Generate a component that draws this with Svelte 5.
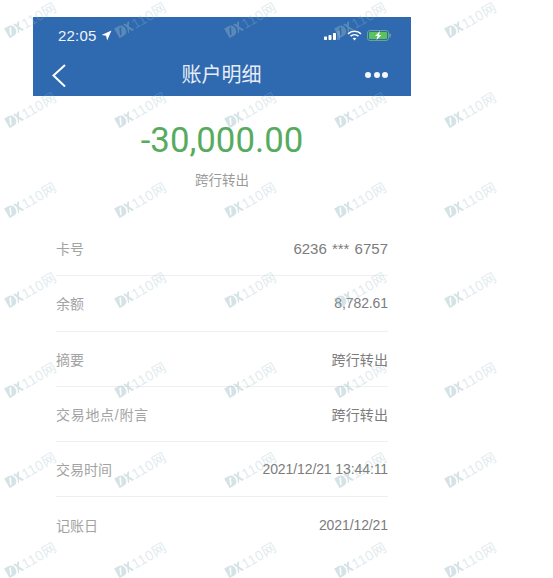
<script>
const rows = [
	{ label: "卡号", value: "6236 *** 6757", cls: "card" },
	{ label: "余额", value: "8,782.61" },
	{ label: "摘要", value: "跨行转出", cls: "cjk" },
	{ label: "交易地点/附言", value: "跨行转出", cls: "cjk", labelCls: "wide" },
	{ label: "交易时间", value: "2021/12/21 13:44:11" },
	{ label: "记账日", value: "2021/12/21" }
];
// watermark tile grid, 5 across and 7 down
const marks = Array.from({ length: 35 });
</script>

<div class="page">
	<div class="phone">
		<header>
			<div class="status">
				<span class="time">22:05</span>
				<svg class="loc" width="11" height="11" viewBox="0 0 10 10"><path d="M9.5 .5 L.5 4.6 L4.6 5.3 L5.6 9.5 Z" fill="#fff"/></svg>
				<span class="spacer"></span>
				<svg class="signal" width="16" height="10" viewBox="0 0 16 10" fill="#fff">
					<rect x="0" y="6.5" width="3" height="3.5" rx=".7"/>
					<rect x="4.5" y="5" width="3" height="5" rx=".7"/>
					<rect x="9" y="3" width="3" height="7" rx=".7"/>
					<rect x="13" y="1" width="3" height="9" rx=".7" opacity=".2"/>
				</svg>
				<svg class="wifi" width="15" height="11" viewBox="0 0 15 11" fill="none" stroke="#fff" stroke-width="1.6">
					<path d="M1 3.8 C4.6 .4 10.4 .4 14 3.8"/>
					<path d="M3.5 6.2 C5.8 4.2 9.2 4.2 11.5 6.2"/>
					<path d="M7.5 10.4 L5.6 8.3 C6.7 7.5 8.3 7.5 9.4 8.3 Z" fill="#fff" stroke="none"/>
				</svg>
				<svg width="24" height="11" viewBox="0 0 24 11">
					<rect x=".5" y=".5" width="21" height="10" rx="2.5" fill="none" stroke="#6aa58f"/>
					<rect x="2" y="2" width="18" height="7" rx="1.2" fill="#5cc25a"/>
					<rect x="22.3" y="3.5" width="1.5" height="4" rx=".7" fill="#6aa58f"/>
					<path d="M13 1 L8 6 H10.5 L9.5 10 L14.5 5 H12 Z" fill="#fff"/>
				</svg>
			</div>
			<div class="nav">
				<svg width="16" height="24" viewBox="0 0 16 24" fill="none" stroke="#fff" stroke-width="2"><path d="M14 2 L2.5 12.5 L14 23.5"/></svg>
				<h1>账户明细</h1>
				<div class="dots"><i></i><i></i><i></i></div>
			</div>
		</header>

		<div class="amount">-30,000.00</div>
		<div class="kind">跨行转出</div>

		<div class="list">
			{#each rows as row}
				<div class="row">
					<span class="label {row.labelCls || ''}">{row.label}</span>
					<span class="value {row.cls || ''}">{row.value}</span>
				</div>
			{/each}
		</div>
	</div>

	<div class="watermarks">
		{#each marks as _}
			<div class="mark">
				<svg width="17" height="13" viewBox="0 0 17 13">
					<path d="M0 1 H5 C8.5 1 10 3.5 10 6.5 C10 9.5 8.5 12 5 12 H0 Z M2 10 L3.5 10 L7 3 L5 3 Z" fill-rule="evenodd"/>
					<path d="M10 2 H12 L13 4 L15 2 H17 L14 6.5 L17 12 H14.5 L13 9 L11 12 H10 L12 6.5 Z"/>
				</svg>
				<span>110网</span>
			</div>
		{/each}
	</div>
</div>

<style>
	:global(body) {
		background: #fff;
		font-family: "Liberation Sans", "Noto Sans CJK SC", sans-serif;
	}

	.page {
		position: relative;
		width: 553px;
		height: 578px;
		overflow: hidden;
		padding-top: 17px;
		box-sizing: border-box;
	}

	.phone {
		width: 378px;
		margin-left: 33px;
	}

	header {
		background: #2f69b0;
		height: 79px;
		color: #fff;
		box-sizing: border-box;
		padding: 11px 20px 0 25px;
	}

	.status {
		display: flex;
		align-items: center;
		gap: 5px;
		height: 14px;
	}

	.time {
		font-size: 15px;
		color: #f0f4f9;
		letter-spacing: .2px;
	}

	.loc {
		margin-left: -1px;
	}

	.spacer {
		flex: 1;
	}

	.wifi {
		margin-left: 2px;
	}

	.nav {
		display: grid;
		grid-template-columns: 1fr auto 1fr;
		align-items: center;
		height: 24px;
		margin-top: 21px;
		margin-left: -7px;
		margin-right: 3px;
	}

	h1 {
		margin: 0;
		padding-left: 4px;
		font-size: 20px;
		font-weight: 400;
		line-height: 24px;
		color: #e6edf6;
	}

	.dots {
		display: flex;
		gap: 2.5px;
		justify-self: end;
	}

	.dots i {
		width: 6px;
		height: 6px;
		border-radius: 50%;
		background: #f4f7fb;
	}

	.amount {
		margin-top: 24px;
		text-align: center;
		font-family: Roboto, "Liberation Sans", sans-serif;
		font-size: 34.8px;
		line-height: 40px;
		color: #57ab5f;
	}

	.kind {
		margin-top: 12px;
		text-align: center;
		font-size: 13.5px;
		line-height: 18px;
		color: #9a9a9a;
	}

	.list {
		margin: 31px 23px 0 23px;
	}

	.row {
		display: flex;
		justify-content: space-between;
		align-items: center;
		height: 55.3px;
		border-bottom: 1px solid #efefef;
		box-sizing: border-box;
		font-size: 14px;
	}

	.row:last-child {
		border-bottom: 0;
	}

	.label {
		color: #a3a3a3;
	}

	.label.wide {
		letter-spacing: .7px;
	}

	.value {
		color: #7c7c7c;
		letter-spacing: -.1px;
	}

	.value.card {
		font-size: 15px;
		letter-spacing: 0;
		word-spacing: 1px;
	}

	.value.cjk {
		letter-spacing: .1px;
	}

	.watermarks {
		position: absolute;
		inset: 0;
		display: grid;
		grid-template-columns: repeat(5, 110px);
		grid-auto-rows: 90px;
		padding: 0 0 0 3px;
		pointer-events: none;
	}

	.mark {
		display: flex;
		align-items: center;
		gap: 1px;
		width: 52px;
		height: 40px;
		transform: rotate(-30deg);
		color: rgba(150, 185, 195, .3);
		font-size: 14px;
		letter-spacing: .3px;
		white-space: nowrap;
	}

	.mark svg {
		flex: none;
		fill: rgba(150, 185, 195, .4);
	}
</style>
